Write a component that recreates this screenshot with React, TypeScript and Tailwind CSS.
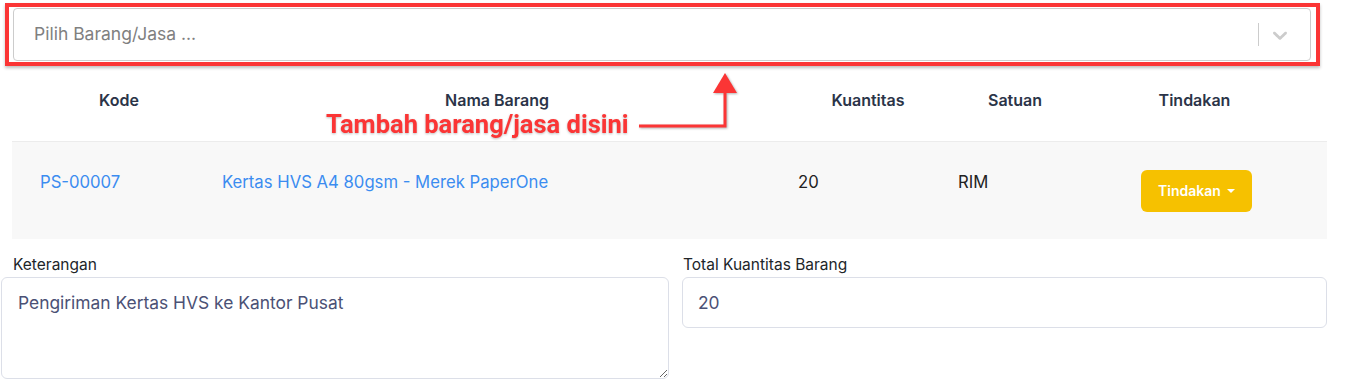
import { useState } from "react";

const headers = ["Kode", "Nama Barang", "Kuantitas", "Satuan", "Tindakan"];

export default function App() {
  const [note, setNote] = useState("Pengiriman Kertas HVS ke Kantor Pusat");
  const [total, setTotal] = useState("20");

  return (
    <div className="relative w-[1348px] h-[384px] bg-white overflow-hidden font-['Inter','Liberation_Sans',sans-serif]">
      {/* Select */}
      <div className="pt-[8px] pl-[13px]">
        <div className="w-[1298px] h-[53px] border border-[#cccccc] rounded-[4px] bg-white flex items-center">
          <span className="pl-[20px] text-[17.5px] text-[#808080]">Pilih Barang/Jasa ...</span>
          <div className="ml-auto flex items-center pr-[18px]">
            <span className="w-px h-[23px] bg-[#cccccc]" />
            <svg viewBox="0 0 20 20" className="w-[24px] h-[24px] ml-[9px] fill-[#cccccc]">
              <path d="M4.516 7.548c0.436-0.446 1.043-0.481 1.576 0l3.908 3.747 3.908-3.747c0.533-0.481 1.141-0.446 1.574 0 0.436 0.445 0.408 1.197 0 1.615-0.406 0.418-4.695 4.502-4.695 4.502-0.217 0.223-0.502 0.335-0.787 0.335s-0.57-0.112-0.789-0.335c0 0-4.287-4.084-4.695-4.502s-0.436-1.17 0-1.615z" />
            </svg>
          </div>
        </div>
      </div>

      {/* Table */}
      <div className="ml-[12px] w-[1315px] mt-[5px]">
        <div className="grid grid-cols-[214px_542px_200px_94px_265px] h-[75px] pt-[22px]">
          {headers.map((h) => (
            <div key={h} className="text-center text-[16px] leading-[24px] font-semibold text-[#2b3448]">
              {h}
            </div>
          ))}
        </div>
        <div className="grid grid-cols-[194px_576px_160px_183px_202px] border-t border-[#ececec] bg-[#f8f8f8] h-[98px] pt-[28px] text-[16.7px] leading-[24px]">
          <div className="pl-[28px] text-[#3b8cf0]">PS-00007</div>
          <div className="pl-[16px] text-[#3b8cf0]">Kertas HVS A4 80gsm - Merek PaperOne</div>
          <div className="pl-[16px] text-[#222222]">20</div>
          <div className="pl-[16px] text-[#222222]">RIM</div>
          <div className="pl-[16px]">
            <button className="w-[111px] h-[42px] rounded-[6px] bg-[#f6c100] text-white text-[14px] font-semibold flex items-center justify-center gap-[6px]">
              Tindakan
              <span className="w-0 h-0 border-l-[4px] border-r-[4px] border-t-[4px] border-l-transparent border-r-transparent border-t-white" />
            </button>
          </div>
        </div>
      </div>

      {/* Form fields */}
      <div className="flex gap-[13px] pl-[1px] mt-[16px]">
        <div className="w-[668px] flex flex-col">
          <label className="pl-[12px] text-[15.5px] leading-[20px] text-[#212529] mb-[2px]">Keterangan</label>
          <textarea
            value={note}
            onChange={(e) => setNote(e.target.value)}
            className="h-[102px] border border-[#dcdfe8] rounded-[6px] px-[16px] py-[13px] text-[17.4px] leading-[24px] text-[#4b5175] outline-none"
          />
        </div>
        <div className="w-[645px] flex flex-col">
          <label className="pl-[1px] text-[15.5px] leading-[20px] text-[#212529] mb-[2px]">Total Kuantitas Barang</label>
          <input
            value={total}
            onChange={(e) => setTotal(e.target.value)}
            className="h-[51px] border border-[#dcdfe8] rounded-[6px] px-[15px] text-[17.4px] text-[#4b5175] outline-none"
          />
        </div>
      </div>

      {/* Annotation overlay */}
      <div className="absolute left-[5px] top-[3px] w-[1315px] h-[63px] border-[4px] border-[#fb3535] shadow-[0_2px_3px_rgba(0,0,0,0.25)] pointer-events-none" />
      <div className="absolute left-[326px] top-[110px] text-[25.5px] leading-[28px] font-bold text-[#fb3535] font-['Roboto',sans-serif] drop-shadow-[0_1px_1px_rgba(0,0,0,0.25)]">
        Tambah barang/jasa disini
      </div>
      <svg className="absolute left-0 top-0 w-[1348px] h-[384px] pointer-events-none drop-shadow-[1px_1px_1px_rgba(0,0,0,0.3)]">
        <path d="M639 126 H725 V90" fill="none" stroke="#fb3535" strokeWidth="3" />
        <polygon points="713,93 725,73 737,93" fill="#fb3535" />
      </svg>
    </div>
  );
}
